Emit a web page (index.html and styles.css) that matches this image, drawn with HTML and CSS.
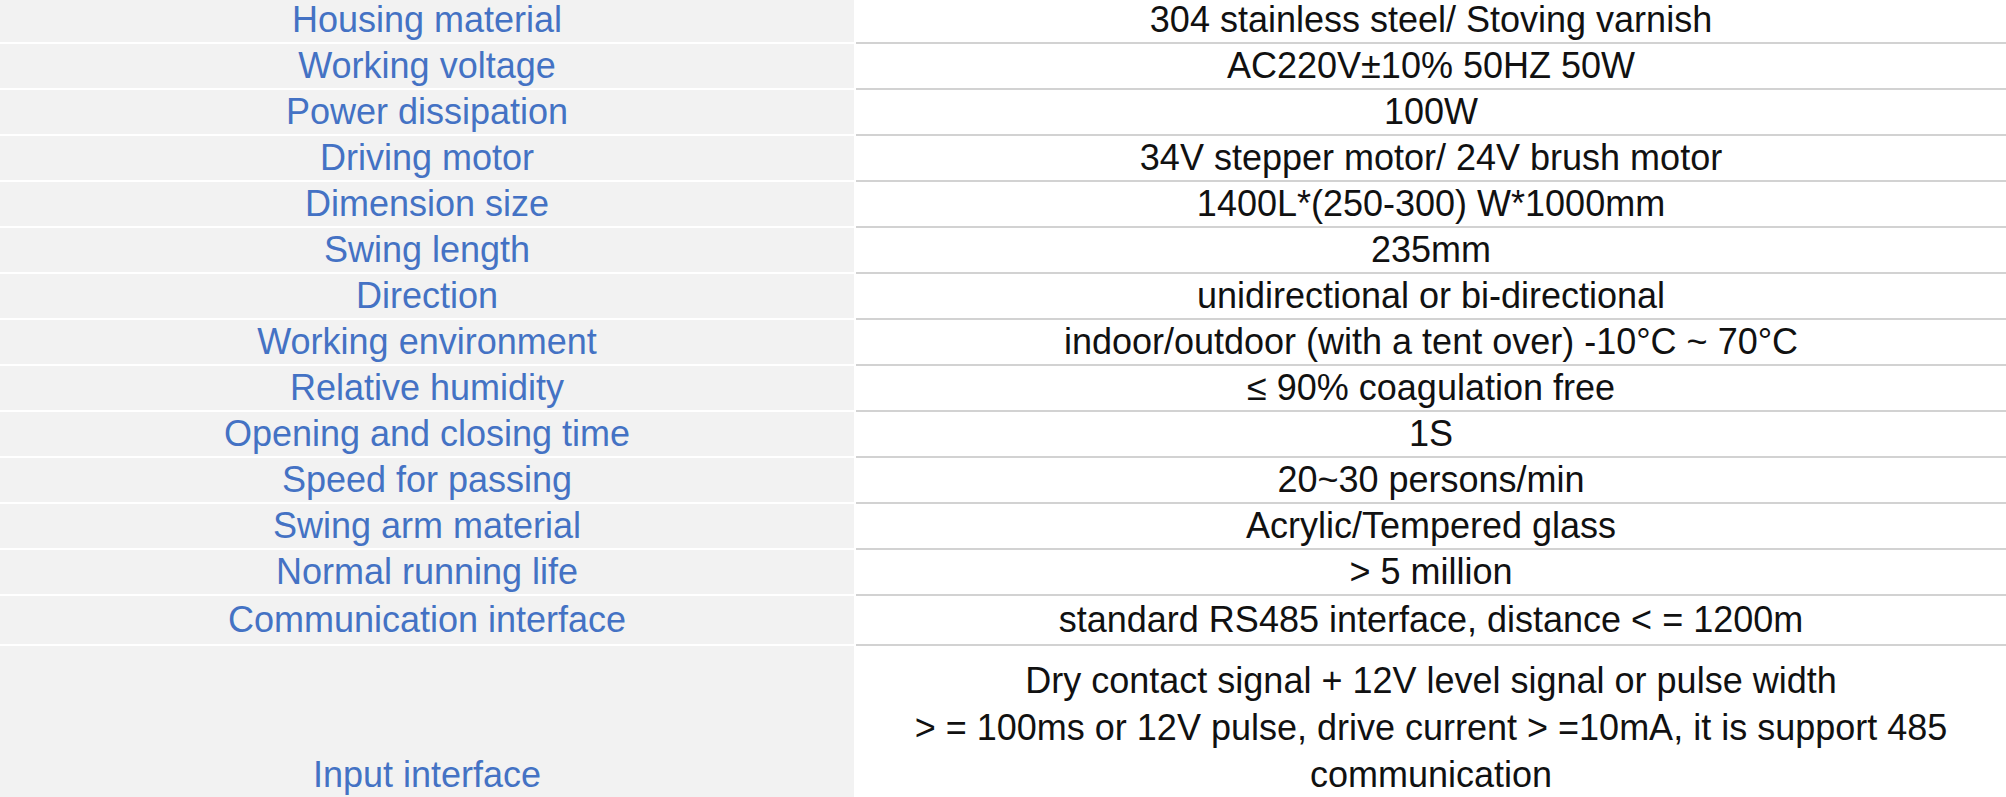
FILE: index.html
```html
<!DOCTYPE html>
<html lang="en">
<head>
<meta charset="utf-8">
<title>Specifications</title>
<link rel="stylesheet" href="styles.css">
</head>
<body>
<table class="spec">
  <colgroup><col class="col-name"><col class="col-value"></colgroup>
  <tbody>
    <tr><td class="name">Housing material</td><td class="value">304 stainless steel/ Stoving varnish</td></tr>
    <tr><td class="name">Working voltage</td><td class="value">AC220V±10% 50HZ 50W</td></tr>
    <tr><td class="name">Power dissipation</td><td class="value">100W</td></tr>
    <tr><td class="name">Driving motor</td><td class="value">34V stepper motor/ 24V brush motor</td></tr>
    <tr><td class="name">Dimension size</td><td class="value">1400L*(250-300) W*1000mm</td></tr>
    <tr><td class="name">Swing length</td><td class="value">235mm</td></tr>
    <tr><td class="name">Direction</td><td class="value">unidirectional or bi-directional</td></tr>
    <tr><td class="name">Working environment</td><td class="value">indoor/outdoor (with a tent over) -10°C ~ 70°C</td></tr>
    <tr><td class="name">Relative humidity</td><td class="value">≤ 90% coagulation free</td></tr>
    <tr><td class="name">Opening and closing time</td><td class="value">1S</td></tr>
    <tr><td class="name">Speed for passing</td><td class="value">20~30 persons/min</td></tr>
    <tr><td class="name">Swing arm material</td><td class="value">Acrylic/Tempered glass</td></tr>
    <tr><td class="name">Normal running life</td><td class="value">&gt; 5 million</td></tr>
    <tr class="row-tall"><td class="name">Communication interface</td><td class="value">standard RS485 interface, distance &lt; = 1200m</td></tr>
    <tr class="row-multi"><td class="name">Input interface</td><td class="value">Dry contact signal + 12V level signal or pulse width<br>&gt; = 100ms or 12V pulse, drive current &gt; =10mA, it is support 485<br>communication</td></tr>
  </tbody>
</table>
</body>
</html>
```

FILE: styles.css
```css
html, body {
  margin: 0;
  padding: 0;
  background: #ffffff;
}

body {
  font-family: "Liberation Sans", Arial, sans-serif;
  font-size: 36px;
  overflow: hidden;
}

.spec {
  width: 2006px;
  table-layout: fixed;
  border-collapse: separate;
  border-spacing: 0;
  margin-top: -2px;
}

.col-name { width: 856px; }
.col-value { width: 1150px; }

.spec td {
  height: 44px;
  padding: 0;
  line-height: 44px;
  text-align: center;
  vertical-align: middle;
  white-space: nowrap;
}

.name {
  color: #4472c4;
  background: #f2f2f2;
  background-clip: padding-box;
  border-right: 2px solid #ffffff;
  border-bottom: 2px solid #ffffff;
}

.value {
  color: #111111;
  border-bottom: 2px solid #d2d2d2;
}

.row-tall td {
  height: 48px;
}

.row-multi td {
  height: 139px;
  padding-top: 11px;
  line-height: 47px;
}

.row-multi .name {
  vertical-align: bottom;
}

.row-multi .value {
  vertical-align: top;
}
```
